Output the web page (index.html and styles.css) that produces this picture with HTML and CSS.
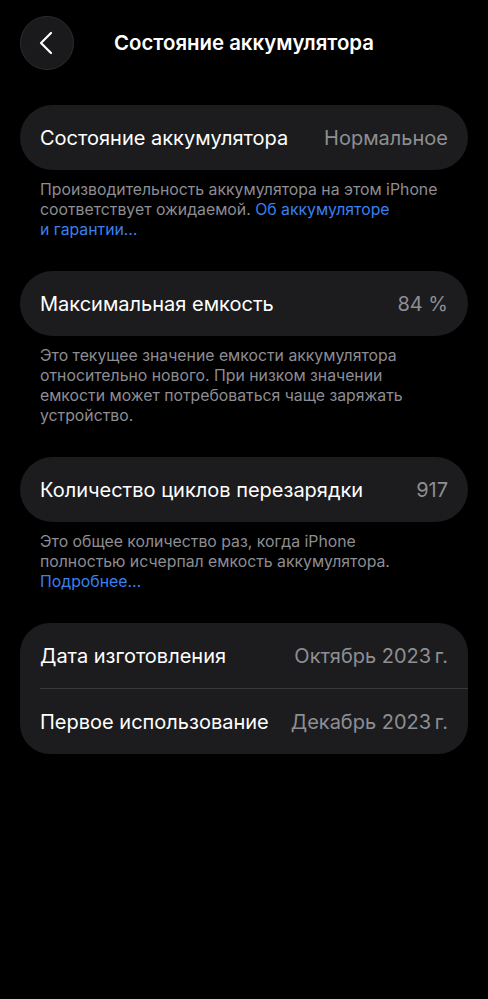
FILE: index.html
```html
<!DOCTYPE html>
<html lang="ru">
<head>
<meta charset="utf-8">
<link rel="stylesheet" href="styles.css">
</head>
<body>
<div class="screen">
  <header class="nav">
    <button class="back" aria-label="Назад">
      <svg width="14" height="24" viewBox="0 0 14 24"><path d="M12 2 L2 12 L12 22" fill="none" stroke="#fff" stroke-width="2.2" stroke-linecap="round" stroke-linejoin="round"/></svg>
    </button>
    <h1 class="title">Состояние аккумулятора</h1>
  </header>

  <section class="group">
    <div class="card">
      <div class="row"><span class="label">Состояние аккумулятора</span><span class="value">Нормальное</span></div>
    </div>
    <p class="footer"><span class="line">Производительность аккумулятора на этом iPhone</span><span class="line">соответствует ожидаемой. <a class="link">Об аккумуляторе</a></span><span class="line"><a class="link">и гарантии…</a></span></p>
  </section>

  <section class="group">
    <div class="card">
      <div class="row"><span class="label">Максимальная емкость</span><span class="value">84 %</span></div>
    </div>
    <p class="footer">Это текущее значение емкости аккумулятора относительно нового. При низком значении емкости может потребоваться чаще заряжать устройство.</p>
  </section>

  <section class="group">
    <div class="card">
      <div class="row"><span class="label">Количество циклов перезарядки</span><span class="value">917</span></div>
    </div>
    <p class="footer"><span class="line">Это общее количество раз, когда iPhone</span><span class="line">полностью исчерпал емкость аккумулятора.</span><span class="line"><a class="link">Подробнее…</a></span></p>
  </section>

  <section class="group">
    <div class="card list">
      <div class="row"><span class="label">Дата изготовления</span><span class="value">Октябрь 2023&#8201;г.</span></div>
      <div class="sep"></div>
      <div class="row"><span class="label">Первое использование</span><span class="value">Декабрь 2023&#8201;г.</span></div>
    </div>
  </section>
</div>
</body>
</html>
```

FILE: styles.css
```css
html, body {
  margin: 0;
  padding: 0;
  background: #000;
}
body {
  font-family: Inter, "Noto Sans", "Liberation Sans", sans-serif;
  color: #fff;
  -webkit-font-smoothing: antialiased;
}
.screen {
  width: 488px;
  min-height: 999px;
  padding: 16px 20px 0;
  box-sizing: border-box;
}
.nav {
  display: flex;
  align-items: center;
  gap: 40px;
  height: 54px;
  margin-bottom: 35px;
}
.back {
  width: 54px;
  height: 54px;
  border-radius: 50%;
  background: #1a1a1c;
  border: 1px solid #2c2c2e;
  display: flex;
  align-items: center;
  justify-content: center;
  padding: 0 3px 0 0;
  box-sizing: border-box;
  flex: none;
}
.title {
  margin: 0 0 1px;
  font-size: 20.4px;
  font-weight: 600;
  letter-spacing: 0;
}
.group {
  margin-bottom: 31px;
}
.card {
  background: #1c1c1e;
  border-radius: 33px;
  padding: 0 20px;
}
.card.list {
  border-radius: 30px;
}
.row {
  display: flex;
  align-items: center;
  justify-content: space-between;
  height: 65px;
  font-size: 20px;
  letter-spacing: 0;
}
.label {
  color: #fff;
  white-space: nowrap;
}
.value {
  color: #8e8e93;
  white-space: nowrap;
}
.sep {
  height: 1px;
  background: #38383a;
  margin-right: -20px;
}
.footer {
  margin: 10px 20px 0;
  font-size: 15.8px;
  line-height: 20px;
  color: #8d8d93;
  letter-spacing: 0;
}
.line {
  display: block;
}
.link {
  color: #3a80f0;
}
```
